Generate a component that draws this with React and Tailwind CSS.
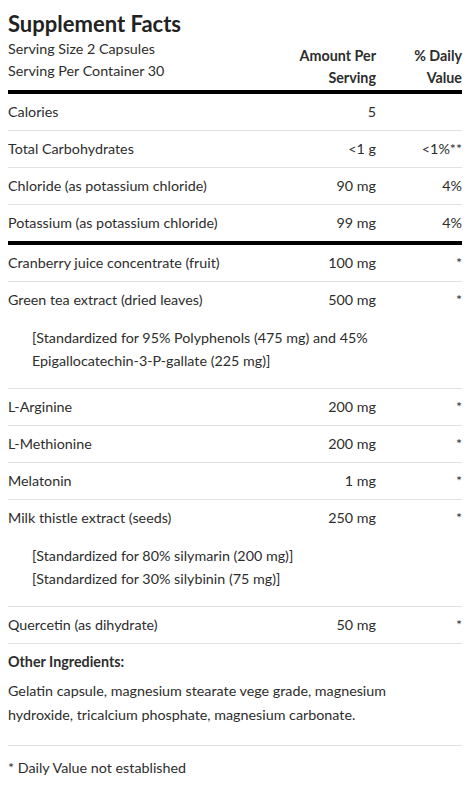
import React from "react";

const font = { fontFamily: "Lato, 'Open Sans', 'Liberation Sans', sans-serif" };

function Row({ name, amount, dv, last, children }) {
  return (
    <div className={last ? "" : "border-b border-[#e2e2e2]"}>
      <div className="flex h-[36px] items-center">
        <div className="flex-1">{name}</div>
        <div className="w-[121px] text-right">{amount}</div>
        <div className="w-[86px] text-right">{dv}</div>
      </div>
      {children ? (
        <div className="pl-[24px] pt-[8px] pb-[16px] leading-[23px]">{children}</div>
      ) : null}
    </div>
  );
}

export default function App() {
  return (
    <div className="bg-white text-[14.3px] text-[#2d2d2d] pl-[8px] pr-[7px]" style={font}>
      <h1 className="pt-[10px] text-[22px] font-bold leading-[28px] text-[#222]">Supplement Facts</h1>
      <div className="flex items-end">
        <div className="flex-1 leading-[22px] pb-[8px]">
          <div>Serving Size 2 Capsules</div>
          <div>Serving Per Container 30</div>
        </div>
        <div className="w-[121px] text-right font-bold leading-[22px] pb-[1px]">
          <div>Amount Per</div>
          <div>Serving</div>
        </div>
        <div className="w-[86px] text-right font-bold leading-[22px] pb-[1px]">
          <div>% Daily</div>
          <div>Value</div>
        </div>
      </div>
      <div className="h-[4px] bg-black" />
      <Row name="Calories" amount="5" dv="" />
      <Row name="Total Carbohydrates" amount="<1 g" dv="<1%**" />
      <Row name="Chloride (as potassium chloride)" amount="90 mg" dv="4%" />
      <Row name="Potassium (as potassium chloride)" amount="99 mg" dv="4%" last />
      <div className="h-[4px] bg-black" />
      <Row name="Cranberry juice concentrate (fruit)" amount="100 mg" dv="*" />
      <Row name="Green tea extract (dried leaves)" amount="500 mg" dv="*">
        <div>[Standardized for 95% Polyphenols (475 mg) and 45%</div>
        <div>Epigallocatechin-3-P-gallate (225 mg)]</div>
      </Row>
      <Row name="L-Arginine" amount="200 mg" dv="*" />
      <Row name="L-Methionine" amount="200 mg" dv="*" />
      <Row name="Melatonin" amount="1 mg" dv="*" />
      <Row name="Milk thistle extract (seeds)" amount="250 mg" dv="*">
        <div>[Standardized for 80% silymarin (200 mg)]</div>
        <div>[Standardized for 30% silybinin (75 mg)]</div>
      </Row>
      <Row name="Quercetin (as dihydrate)" amount="50 mg" dv="*" />
      <div className="border-b border-[#e2e2e2] pb-[18px]">
        <div className="pt-[7px] font-bold leading-[22px]">Other Ingredients:</div>
        <p className="pt-[6px] leading-[24px]">
          Gelatin capsule, magnesium stearate vege grade, magnesium
          <br />
          hydroxide, tricalcium phosphate, magnesium carbonate.
        </p>
      </div>
      <div className="pt-[10px] leading-[24px]">* Daily Value not established</div>
    </div>
  );
}
